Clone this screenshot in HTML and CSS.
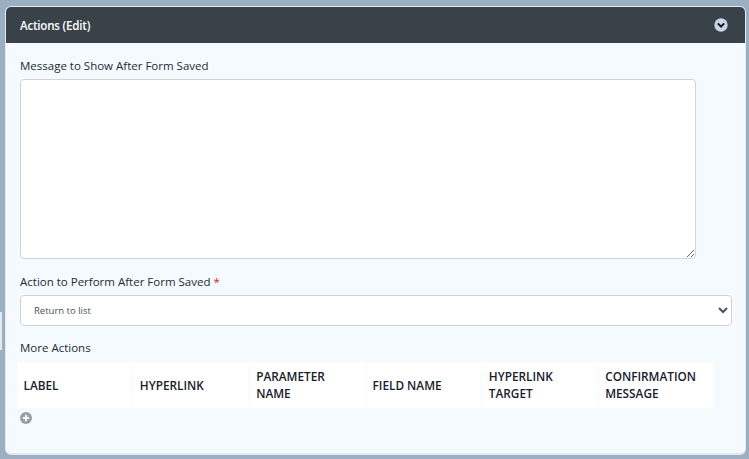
FILE: index.html
```html
<!DOCTYPE html>
<html lang="en">
<head>
<meta charset="utf-8">
<title>Actions (Edit)</title>
<link rel="stylesheet" href="styles.css">
</head>
<body>
<div class="edge-tab"></div>
<section class="card">
  <header class="card-header">
    <h2 class="card-title">Actions (Edit)</h2>
    <svg class="toggle" viewBox="0 0 14 14" width="14" height="14" aria-hidden="true">
      <circle cx="7" cy="7" r="6.7" fill="#c5d5e6"/>
      <path d="M3.8 5.4 7 8.6l3.2-3.2" fill="none" stroke="#10151c" stroke-width="2"/>
    </svg>
  </header>
  <div class="card-body">
    <label class="field-label">Message to Show After Form Saved</label>
    <textarea class="message"></textarea>
    <label class="field-label action-label">Action to Perform After Form Saved <span class="req">*</span></label>
    <select class="action-select"><option>Return to list</option></select>
    <div class="field-label more-label">More Actions</div>
    <div class="actions-table">
      <div class="cell">LABEL</div>
      <div class="cell">HYPERLINK</div>
      <div class="cell">PARAMETER NAME</div>
      <div class="cell">FIELD NAME</div>
      <div class="cell">HYPERLINK TARGET</div>
      <div class="cell">CONFIRMATION MESSAGE</div>
    </div>
    <svg class="add" viewBox="0 0 12 12" width="12" height="12" aria-hidden="true">
      <circle cx="6" cy="6" r="6" fill="#9b9ea1"/>
      <path d="M6 2.8v6.4M2.8 6h6.4" stroke="#f6faff" stroke-width="2"/>
    </svg>
  </div>
</section>
</body>
</html>
```
FILE: styles.css
```css
html, body {
  margin: 0;
  height: 100%;
}
body {
  background: #9aafc1;
  font-family: "Open Sans", "Noto Sans", sans-serif;
  color: #212b36;
  overflow: hidden;
  padding: 6px 3px 4px 5px;
  box-sizing: border-box;
  height: 459px;
}
.edge-tab {
  position: absolute;
  left: 0;
  top: 312px;
  width: 2px;
  height: 38px;
  background: #e4e8ec;
}
.card {
  height: 449px;
  border-radius: 6px;
  background: #f5faff;
  overflow: hidden;
  border: 1px solid #e3e9ef;
  border-width: 1px 1px 2px 1px;
  box-sizing: border-box;
}
.card-header {
  height: 36px;
  background: #394249;
  display: flex;
  align-items: center;
  justify-content: space-between;
  padding: 0 17px 0 14px;
}
.card-title {
  margin: 1px 0 0;
  font-size: 11.6px;
  letter-spacing: -.22px;
  font-weight: 600;
  color: #fff;
}
.toggle {
  display: block;
}
.card-body {
  padding: 14px 14px 0 14px;
}
.field-label {
  display: block;
  font-size: 11.5px;
  line-height: 18px;
  color: #212b36;
}
.message {
  display: block;
  box-sizing: border-box;
  width: 676px;
  height: 180px;
  margin: 4px 0 0;
  background: #fff;
  border: 1px solid #ced4da;
  border-radius: 4px;
}
.action-label {
  margin-top: 14px;
}
.req {
  color: #e02020;
}
.action-select {
  display: block;
  box-sizing: border-box;
  width: 712px;
  height: 31px;
  margin-top: 4px;
  padding: 0 9px;
  background: #fff;
  border: 1px solid #ced4da;
  border-radius: 4px;
  font-family: inherit;
  font-size: 9.5px;
  color: #495057;
}
.more-label {
  margin-top: 13px;
}
.actions-table {
  display: grid;
  grid-template-columns: repeat(6, 1fr);
  gap: 1px;
  width: 697px;
  height: 46px;
  margin: 5px 0 0 -3px;
}
.cell {
  background: #fff;
  display: flex;
  align-items: center;
  padding: 0 6px 0 6.5px;
  font-size: 11.8px;
  line-height: 17px;
  font-weight: 600;
  color: #17202b;
}
.add {
  display: block;
  margin: 4px 0 0 0;
}
```
